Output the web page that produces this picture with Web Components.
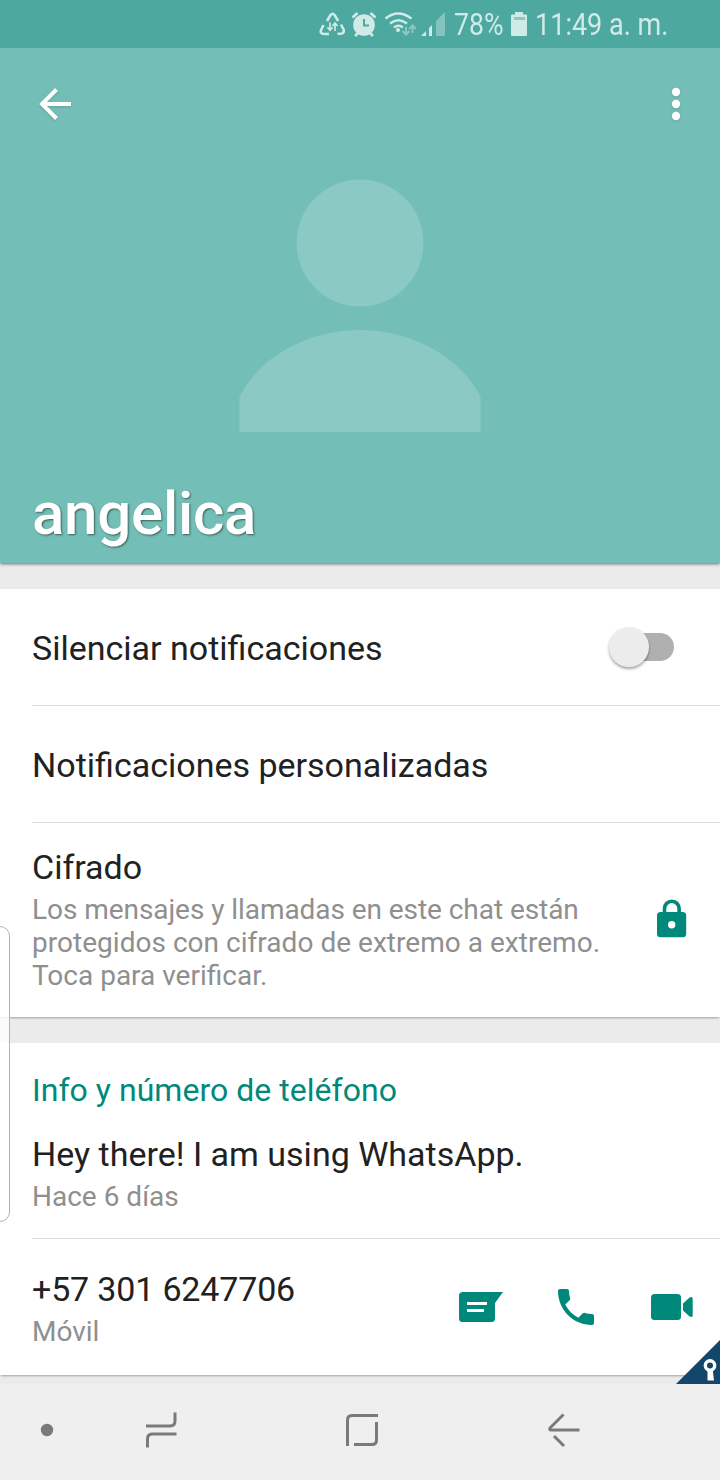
<!DOCTYPE html>
<html lang="es">
<head>
<meta charset="utf-8">
<title>angelica</title>
<style>
html,body{margin:0;padding:0}
body{width:720px;height:1480px;overflow:hidden;background:#ebebeb;font-family:Roboto,"Noto Sans",sans-serif;color:#212121}
</style>
</head>
<body>
<contact-screen></contact-screen>
<script>
const define = (name, html) => customElements.define(name, class extends HTMLElement {
  constructor() {
    super();
    const t = document.createElement('template');
    t.innerHTML = html;
    this.attachShadow({mode: 'open'}).append(t.content.cloneNode(true));
  }
});

define('status-bar', `
<style>
:host{display:flex;height:48px;background:#4da89f;color:#d0eae7;align-items:center;box-sizing:border-box;position:relative;z-index:2}
svg{display:block;flex:none;margin-left:312px}
.t{font-size:31px;line-height:48px;white-space:nowrap;height:48px;padding-top:1px;box-sizing:border-box}
.t span{display:inline-block;transform-origin:0 50%;transform:scaleX(.86)}
.pct{margin-left:3px;width:53px}
.time{margin-left:8px}.time span{transform:scaleX(.872)}
</style>
<svg width="139" height="48" viewBox="312 0 139 48" fill="none" stroke="#d0eae7">
 <g stroke-width="2.6" stroke-linejoin="round">
  <path d="M327 21l3.600-6q2-2.400 4 0l3.600 6M341 24.500l2.600 5q1 4-2.800 4.300H337.500M329 34h-5.500q-3.800-.6-2.400-4l2.400-5"/>
 </g>
 <path d="M330 22.500v7.500m-2.600-2.700l2.600 3 2.600-3M335 31v-7.500m-2.600 2.500l2.600-3 2.600 3" stroke-width="1.700"/>
 <circle cx="364" cy="25" r="10.800" fill="#d0eae7" stroke="none"/>
 <path d="M352.500 17.500l5-4.500M375.500 17.500l-5-4.500M358 33l-3 3M370 33l3 3" stroke-width="2.700"/>
 <path d="M364 19v6.500h5" stroke="#4da89f" stroke-width="2"/>
 <g stroke-width="2.600"><path d="M385.500 18.500q12.500-10 26 0M390 23.500q8.200-6.500 17 0M394 27.500q4.500-3.500 8.800 0"/></g>
 <circle cx="398" cy="30" r="2" fill="#d0eae7" stroke="none"/>
 <g stroke="#8cc8c2" stroke-width="2"><path d="M406 27v7m-3.500-3l3.500 3.500 3.500-3.500M412.500 33v-7m-3.500 3l3.500-3.500 3.500 3.500"/></g>
 <path d="M421 36l5-5v5zM429 36v-8l3-3v11z" fill="#d0eae7" stroke="none"/>
 <path d="M436 36V21l9-9v24z" fill="#85c4be" stroke="none"/>
</svg>
<div class="t pct"><span>78%</span></div>
<svg style="margin-left:4px" width="16" height="48" viewBox="511 0 16 48"><path d="M515 12h8v2.500h3q1 0 1 1v19.500q0 1-1 1h-14q-1 0-1-1v-19.500q0-1 1-1h3z" fill="#d0eae7"/><path d="M514 17h11v3h-11z" fill="#8cc8c2"/></svg>
<div class="t time"><span>11:49 a. m.</span></div>`);

define('profile-header', `
<style>
:host{display:flex;flex-direction:column;height:515px;background:#73beb6;box-shadow:0 1px 3px rgba(0,0,0,.55);position:relative;box-sizing:border-box}
.bar{display:flex;justify-content:space-between;height:112px}
svg{display:block;filter:drop-shadow(0 1px 1px rgba(0,0,0,.15))}
.avatar{margin:0 auto;height:290px;flex:none;filter:none}
.name{font-size:60px;font-weight:500;line-height:70px;letter-spacing:-.25px;color:#fff;text-shadow:1px 1px 2px rgba(0,0,0,.5);padding:29px 0 0 32px;white-space:nowrap}
</style>
<div class="bar">
 <svg width="110" height="112" viewBox="0 48 110 112" fill="none" stroke="#fff" stroke-width="4"><path d="M71 104H42M56.500 89.500L42 104l14.500 14.500"/></svg>
 <svg width="88" height="112" viewBox="632 48 88 112" fill="#fff"><circle cx="676" cy="92" r="4.200"/><circle cx="676" cy="104" r="4.200"/><circle cx="676" cy="116" r="4.200"/></svg>
</div>
<svg class="avatar" width="260" height="290" viewBox="230 160 260 290" fill="#8bc9c4"><circle cx="360" cy="243" r="63.500"/><path d="M239.500 432V397C258 358 307 330 360 330S462 358 480.500 397V432z"/></svg>
<div class="name"><slot></slot></div>`);

define('info-card', `
<style>:host{display:block;background:#fff;box-shadow:0 2px 2px -1px rgba(0,0,0,.32)}</style><slot></slot>`);

define('info-row', `
<style>
:host{display:flex;box-sizing:border-box;padding-left:32px;white-space:nowrap}
:host([line]) .wrap{border-bottom:1px solid #dedede}
.wrap{flex:1;display:flex;box-sizing:border-box;height:var(--h);padding-top:var(--top,24px)}
.text{flex:1;min-width:0}
.title{font-size:34px;line-height:40px;height:40px;letter-spacing:var(--ls,0)}
.sub{font-size:28px;line-height:33px;color:#8f8f8f;margin-top:6px}
</style>
<div class="wrap"><div class="text"><div class="title"><slot></slot></div><div class="sub"><slot name="sub"></slot></div></div><slot name="end"></slot></div>`);

define('section-title', `
<style>:host{display:block;padding:28px 0 0 32px;font-size:32px;line-height:38px;letter-spacing:.03px;color:#00897b;height:35px;white-space:nowrap}</style><slot></slot>`);

define('toggle-switch', `
<style>:host{display:block;width:65px;height:42px;margin:-1px 46px 0 0}
.track{display:flex;align-items:center;margin:6px 0 0 12px;width:53px;height:28px;border-radius:14px;background:#b0b0b0}
.knob{width:40px;height:40px;flex:none;border-radius:50%;background:#ececec;margin-left:-12px;box-shadow:0 2px 3px rgba(0,0,0,.35)}</style>
<div class="track"><div class="knob"></div></div>`);

define('lock-icon', `
<style>:host{display:block;margin:49px 32px 0 0}svg{display:block}</style>
<svg width="34" height="44" viewBox="654 896 34 44"><path d="M664.500 914v-5.500a7.300 7.300 0 0 1 14.600 0V914" fill="none" stroke="#00897b" stroke-width="3.600"/><rect x="657" y="912" width="29.200" height="25.300" rx="3.500" fill="#00897b"/><circle cx="671.700" cy="924.700" r="3.700" fill="#fff"/></svg>`);

define('contact-actions', `
<style>:host{display:flex;margin:17px 26px 0 0}svg{display:block}svg+svg{margin-left:52px}svg+svg+svg{margin-left:54px}</style>
<svg width="46" height="40" viewBox="458 1286 46 40" fill="#00897b"><path d="M463 1292h40l-8 11v15.500q0 3.500-3.500 3.500H462.500q-3.500 0-3.500-3.500v-23q0-3.500 4-3.500z"/><path d="M467 1302h20v3h-20zM467 1309h17v3h-17z" fill="#fff"/></svg>
<svg width="40" height="40" viewBox="556 1286 40 40" fill="#00897b"><path transform="translate(552 1283) scale(2)" d="M6.620 10.790c1.440 2.830 3.760 5.140 6.590 6.590l2.200-2.200c.27-.27.67-.36 1.020-.24 1.120.37 2.330.57 3.570.57.550 0 1 .45 1 1V20c0 .55-.45 1-1 1-9.390 0-17-7.610-17-17 0-.55.45-1 1-1h3.500c.55 0 1 .45 1 1 0 1.250.2 2.450.57 3.570.110.350.030.740-.25 1.020l-2.200 2.200z"/></svg>
<svg width="44" height="40" viewBox="650 1286 44 40" fill="#00897b"><rect x="651" y="1294" width="30" height="26" rx="3.500"/><path d="M683 1303.500l6-5.500q3.700-2.500 3.700 1v16q0 3.500-3.700 1l-6-5.500z"/></svg>`);

define('nav-bar', `
<style>:host{display:block;height:96px;background:#efefef;position:relative}svg{display:block}</style>
<svg width="720" height="96" viewBox="0 1384 720 96" fill="none" stroke="#7a7a7a" stroke-width="3">
<circle cx="47" cy="1430" r="6.200" fill="#7a7a7a" stroke="none"/>
<path d="M146 1426h24q5 0 5-5v-8.500M176.500 1434H152q-4.500 0-4.500 5v8.500"/>
<path d="M378 1415.500H352q-4.500 0-4.500 4.500v26M354 1444.500h18q4.500 0 4.500-4.500v-18"/>
<path d="M563.500 1414.500l-13 13q-2 2.500 1 2.500h28M554 1436l10 10" stroke-linejoin="round"/>
</svg>`);

define('edge-panel', `
<style>:host{display:block;position:absolute;left:-20px;top:926px;width:30px;height:296px;box-sizing:border-box;border:1px solid #b2b2b2;border-radius:10px;background:rgba(255,255,255,.8)}</style>`);

define('corner-badge', `
<style>:host{display:block;position:absolute;left:676px;top:1340px}svg{display:block}</style>
<svg width="44" height="44"><path d="M44 0v44H0z" fill="#14456a"/><path d="M31.500 28h5l1.500 12.500h-6.500z" fill="#fff"/><circle cx="34" cy="25.500" r="4.700" fill="#14456a" stroke="#fff" stroke-width="3.400"/></svg>`);

define('contact-screen', `
<style>
:host{display:flex;flex-direction:column;width:720px;height:1480px;position:relative;overflow:hidden;background:#ebebeb}
.a{margin-top:26px}.b{margin-top:26px;height:332px}nav-bar{margin-top:9px}
profile-header{z-index:1}
</style>
<status-bar></status-bar>
<profile-header>angelica</profile-header>
<info-card class="a">
 <info-row line style="--h:117px;--top:39px">Silenciar notificaciones<toggle-switch slot="end"></toggle-switch></info-row>
 <info-row line style="--h:117px;--top:39px">Notificaciones personalizadas</info-row>
 <info-row style="--h:194px">Cifrado<span slot="sub"><span style="letter-spacing:-.06px">Los mensajes y llamadas en este chat están</span><br><span style="letter-spacing:.03px">protegidos con cifrado de extremo a extremo.</span><br>Toca para verificar.</span><lock-icon slot="end"></lock-icon></info-row>
</info-card>
<info-card class="b">
 <section-title>Info y número de teléfono</section-title>
 <info-row line style="--h:133px;--top:28px">Hey there! I am using WhatsApp.<span slot="sub">Hace 6 días</span></info-row>
 <info-row style="--h:136px;--top:30px;--ls:-.16px">+57 301 6247706<span slot="sub">Móvil</span><contact-actions slot="end"></contact-actions></info-row>
</info-card>
<nav-bar></nav-bar>
<edge-panel></edge-panel>
<corner-badge></corner-badge>`);
</script>
</body>
</html>
